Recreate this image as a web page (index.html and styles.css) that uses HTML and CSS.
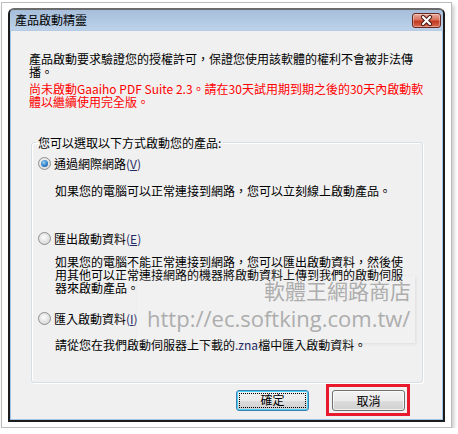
FILE: index.html
```html
<!DOCTYPE html>
<html lang="zh-TW">
<head>
    <meta charset="UTF-8">
    <title>產品啟動精靈</title>
    <link rel="stylesheet" href="styles.css">
</head>
<body>

<div class="shot">
    <div class="window">
        <div class="titlebar">
            <span class="title">產品啟動精靈</span>
            <button class="close" title="關閉">
                <svg width="29" height="15" viewBox="0 0 29 15">
                    <path d="M11 4 L18 11 M18 4 L11 11" stroke="#4a1810" stroke-width="4.2" stroke-linecap="round"/>
                    <path d="M11 4 L18 11 M18 4 L11 11" stroke="#fff" stroke-width="2.2" stroke-linecap="round"/>
                </svg>
            </button>
        </div>

        <div class="client">
            <p class="intro">產品啟動要求驗證您的授權許可，保證您使用該軟體的權利不會被非法傳<br>播。</p>
            <p class="warn">尚未啟動Gaaiho PDF Suite 2.3。請在30天試用期到期之後的30天內啟動軟<br>體以繼續使用完全版。</p>

            <fieldset class="group">
                <legend>您可以選取以下方式啟動您的產品:</legend>

                <label class="option opt-net">
                    <input type="radio" name="mode" checked>
                    <span>通過網際網路<span class="key">(<u>V</u>)</span></span>
                </label>
                <p class="desc desc-net">如果您的電腦可以正常連接到網路，您可以立刻線上啟動產品。</p>

                <label class="option opt-export">
                    <input type="radio" name="mode">
                    <span>匯出啟動資料<span class="key">(<u>E</u>)</span></span>
                </label>
                <p class="desc desc-export">如果您的電腦不能正常連接到網路，您可以匯出啟動資料，然後使<br>用其他可以正常連接網路的機器將啟動資料上傳到我們的啟動伺服<br>器來啟動產品。</p>

                <label class="option opt-import">
                    <input type="radio" name="mode">
                    <span>匯入啟動資料<span class="key">(<u>I</u>)</span></span>
                </label>
                <p class="desc desc-import">請從您在我們啟動伺服器上下載的<span class="key">.zna</span>檔中匯入啟動資料。</p>
            </fieldset>

            <div class="buttons">
                <button class="btn btn-default"><span>確定</span></button>
                <button class="btn btn-marked">取消</button>
            </div>

            <!-- 浮水印 -->
            <div class="watermark">
                <div class="wm-shop">軟體王網路商店</div>
                <div class="wm-url">http://ec.softking.com.tw/</div>
            </div>
        </div>
    </div>
</div>

</body>
</html>
```

FILE: styles.css
```css
body {
    margin: 0;
    background-color: #fff;
    font-family: "Noto Sans CJK TC", sans-serif;
    font-size: 12px;
    color: #000;
}
.shot {
    box-sizing: border-box;
    width: 451px;
    height: 426px;
    margin: 2px 0 0 1px;
    padding: 5px 0 0 6px;
    border: 1px solid #bdbdbd;
    background-color: #fff;
    box-shadow: 2px 3px 4px rgba(0, 0, 0, 0.22);
}
.window {
    box-sizing: border-box;
    width: 437px;
    height: 414px;
    display: flex;
    flex-direction: column;
    border: 2px solid #1c1c1c;
    border-top-color: #6b6b6b;
    border-radius: 6px 6px 0 0;
    background: linear-gradient(#a4bcd9, #bcd1e9 8%, #c2d6ec);
}
.titlebar {
    height: 20px;
    display: flex;
    justify-content: space-between;
    align-items: flex-start;
    padding-left: 5px;
    background: linear-gradient(#a6bedb, #bcd2ea);
    border-radius: 4px 4px 0 0;
}
.title {
    line-height: 20px;
}
.close {
    width: 29px;
    height: 15px;
    margin: 3px 2px 0 0;
    padding: 0;
    border: 1px solid #6a2a20;
    border-radius: 3px;
    background: linear-gradient(#e9ab9c, #d9705c 45%, #c2391f 55%, #d66a52);
    box-shadow: inset 0 0 0 1px rgba(255, 255, 255, 0.35);
    display: flex;
}
.close svg {
    margin: -1px;
}
.client {
    flex: 1;
    position: relative;
    border: 1px solid #9fc2e6;
    border-top-color: #b5cbe4;
    background-color: #f0f0f0;
}
.client p {
    margin: 0;
}
.intro {
    padding: 21px 0 0 18px;
    line-height: 13px;
}
.warn {
    margin-top: 4px !important;
    padding-left: 18px;
    line-height: 13px;
    color: #ff0000;
}
.group {
    box-sizing: border-box;
    width: 392px;
    margin: 28px 0 0 20px;
    padding: 8px 0 31px 0;
    border: 1px solid #d5dfe5;
    border-radius: 3px;
    box-shadow: inset 1px 1px 0 #fff, 1px 1px 0 #fff;
}
.group legend {
    margin-left: 4px;
    padding: 0 2px;
    line-height: 13px;
}
.option {
    display: flex;
    align-items: center;
    gap: 3px;
    margin-left: 6px;
    line-height: 13px;
}
.option input {
    -webkit-appearance: none;
    appearance: none;
    box-sizing: border-box;
    width: 13px;
    height: 13px;
    margin: 0;
    border: 1px solid #8e8f8f;
    border-radius: 50%;
    background: radial-gradient(circle at 45% 40%, #fdfdfd, #e2e2e2 55%, #cfcfcf);
    position: relative;
}
.option input:checked::after {
    content: "";
    position: absolute;
    left: 2px;
    top: 2px;
    width: 7px;
    height: 7px;
    border-radius: 50%;
    background: radial-gradient(circle at 40% 35%, #9fd0f4, #2d7fc7 55%, #1a4f8f);
}
.key {
    color: #1f2a66;
}
.desc {
    margin-left: 23px !important;
    line-height: 13px;
}
.desc-net {
    margin-top: 14px !important;
}
.opt-export {
    margin-top: 35px;
}
.desc-export {
    margin-top: 10px !important;
}
.opt-import {
    margin-top: 18px;
}
.desc-import {
    margin-top: 13px !important;
}
.buttons {
    display: flex;
    justify-content: flex-end;
    gap: 23px;
    margin-top: 7px;
    padding-right: 37px;
}
.btn {
    box-sizing: border-box;
    width: 73px;
    height: 21px;
    padding: 0;
    font-family: inherit;
    font-size: 12px;
    color: #000;
    border: 1px solid #707070;
    border-radius: 3px;
    background: linear-gradient(#f2f2f2, #ebebeb 50%, #dddddd 51%, #cfcfcf);
    box-shadow: inset 0 0 0 1px rgba(255, 255, 255, 0.7);
}
.btn-default {
    border-color: #3c7fb1;
    box-shadow: inset 0 0 0 1px #48d2f8;
    padding: 2px;
}
.btn-default span {
    display: block;
    height: 100%;
    line-height: 13px;
    outline: 1px dotted #000;
    outline-offset: -1px;
}
.btn-marked {
    position: relative;
}
.btn-marked::after {
    content: "";
    position: absolute;
    left: -7px;
    top: -7px;
    right: -6px;
    bottom: -6px;
    border: 3px solid #e8192c;
}
.watermark {
    position: absolute;
    left: 126px;
    top: 245px;
    width: 278px;
    height: 67px;
    background-color: rgba(255, 255, 255, 0.12);
    box-shadow: 1px 1px 3px rgba(0, 0, 0, 0.08);
    color: #adadad;
    pointer-events: none;
}
.wm-shop {
    position: absolute;
    right: 4px;
    top: 2px;
    font-size: 21px;
    line-height: 24px;
}
.wm-url {
    position: absolute;
    left: 10px;
    top: 28px;
    font-family: "Open Sans", sans-serif;
    font-size: 22px;
    line-height: 28px;
}
```
